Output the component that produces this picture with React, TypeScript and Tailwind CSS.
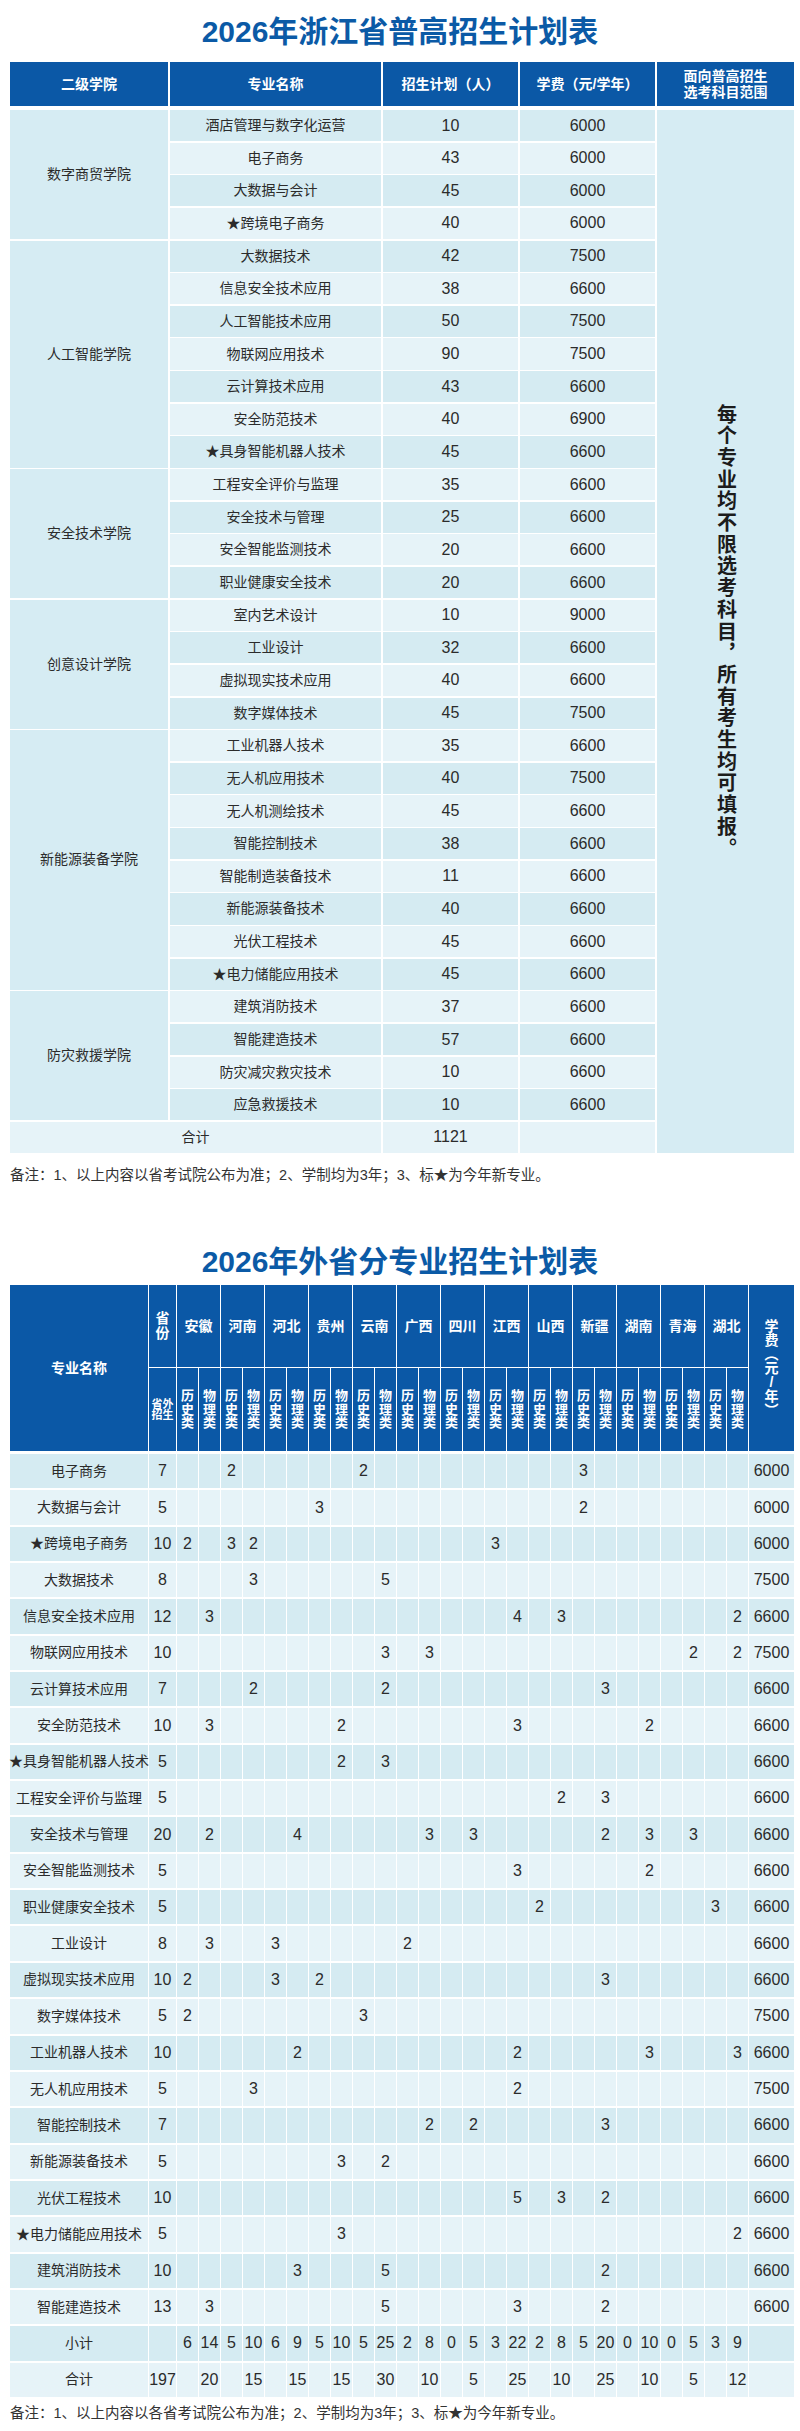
import React from 'react';

type Major = { name: string; plan: number; fee: number };
type College = { name: string; span: string; majors: Major[] };

const colleges: College[] = [
  {
    name: '数字商贸学院',
    span: 'row-span-4',
    majors: [
      { name: '酒店管理与数字化运营', plan: 10, fee: 6000 },
      { name: '电子商务', plan: 43, fee: 6000 },
      { name: '大数据与会计', plan: 45, fee: 6000 },
      { name: '★跨境电子商务', plan: 40, fee: 6000 },
    ],
  },
  {
    name: '人工智能学院',
    span: 'row-span-7',
    majors: [
      { name: '大数据技术', plan: 42, fee: 7500 },
      { name: '信息安全技术应用', plan: 38, fee: 6600 },
      { name: '人工智能技术应用', plan: 50, fee: 7500 },
      { name: '物联网应用技术', plan: 90, fee: 7500 },
      { name: '云计算技术应用', plan: 43, fee: 6600 },
      { name: '安全防范技术', plan: 40, fee: 6900 },
      { name: '★具身智能机器人技术', plan: 45, fee: 6600 },
    ],
  },
  {
    name: '安全技术学院',
    span: 'row-span-4',
    majors: [
      { name: '工程安全评价与监理', plan: 35, fee: 6600 },
      { name: '安全技术与管理', plan: 25, fee: 6600 },
      { name: '安全智能监测技术', plan: 20, fee: 6600 },
      { name: '职业健康安全技术', plan: 20, fee: 6600 },
    ],
  },
  {
    name: '创意设计学院',
    span: 'row-span-4',
    majors: [
      { name: '室内艺术设计', plan: 10, fee: 9000 },
      { name: '工业设计', plan: 32, fee: 6600 },
      { name: '虚拟现实技术应用', plan: 40, fee: 6600 },
      { name: '数字媒体技术', plan: 45, fee: 7500 },
    ],
  },
  {
    name: '新能源装备学院',
    span: 'row-span-8',
    majors: [
      { name: '工业机器人技术', plan: 35, fee: 6600 },
      { name: '无人机应用技术', plan: 40, fee: 7500 },
      { name: '无人机测绘技术', plan: 45, fee: 6600 },
      { name: '智能控制技术', plan: 38, fee: 6600 },
      { name: '智能制造装备技术', plan: 11, fee: 6600 },
      { name: '新能源装备技术', plan: 40, fee: 6600 },
      { name: '光伏工程技术', plan: 45, fee: 6600 },
      { name: '★电力储能应用技术', plan: 45, fee: 6600 },
    ],
  },
  {
    name: '防灾救援学院',
    span: 'row-span-4',
    majors: [
      { name: '建筑消防技术', plan: 37, fee: 6600 },
      { name: '智能建造技术', plan: 57, fee: 6600 },
      { name: '防灾减灾救灾技术', plan: 10, fee: 6600 },
      { name: '应急救援技术', plan: 10, fee: 6600 },
    ],
  },
];

const provinces = ['安徽', '河南', '河北', '贵州', '云南', '广西', '四川', '江西', '山西', '新疆', '湖南', '青海', '湖北'];

// sub column index: province * 2 (+0 历史类, +1 物理类)
type OutRow = { name: string; total: number; v: Record<number, number>; fee: number };

const outRows: OutRow[] = [
  { name: '电子商务', total: 7, v: { 2: 2, 8: 2, 18: 3 }, fee: 6000 },
  { name: '大数据与会计', total: 5, v: { 6: 3, 18: 2 }, fee: 6000 },
  { name: '★跨境电子商务', total: 10, v: { 0: 2, 2: 3, 3: 2, 14: 3 }, fee: 6000 },
  { name: '大数据技术', total: 8, v: { 3: 3, 9: 5 }, fee: 7500 },
  { name: '信息安全技术应用', total: 12, v: { 1: 3, 15: 4, 17: 3, 25: 2 }, fee: 6600 },
  { name: '物联网应用技术', total: 10, v: { 9: 3, 11: 3, 23: 2, 25: 2 }, fee: 7500 },
  { name: '云计算技术应用', total: 7, v: { 3: 2, 9: 2, 19: 3 }, fee: 6600 },
  { name: '安全防范技术', total: 10, v: { 1: 3, 7: 2, 15: 3, 21: 2 }, fee: 6600 },
  { name: '★具身智能机器人技术', total: 5, v: { 7: 2, 9: 3 }, fee: 6600 },
  { name: '工程安全评价与监理', total: 5, v: { 17: 2, 19: 3 }, fee: 6600 },
  { name: '安全技术与管理', total: 20, v: { 1: 2, 5: 4, 11: 3, 13: 3, 19: 2, 21: 3, 23: 3 }, fee: 6600 },
  { name: '安全智能监测技术', total: 5, v: { 15: 3, 21: 2 }, fee: 6600 },
  { name: '职业健康安全技术', total: 5, v: { 16: 2, 24: 3 }, fee: 6600 },
  { name: '工业设计', total: 8, v: { 1: 3, 4: 3, 10: 2 }, fee: 6600 },
  { name: '虚拟现实技术应用', total: 10, v: { 0: 2, 4: 3, 6: 2, 19: 3 }, fee: 6600 },
  { name: '数字媒体技术', total: 5, v: { 0: 2, 8: 3 }, fee: 7500 },
  { name: '工业机器人技术', total: 10, v: { 5: 2, 15: 2, 21: 3, 25: 3 }, fee: 6600 },
  { name: '无人机应用技术', total: 5, v: { 3: 3, 15: 2 }, fee: 7500 },
  { name: '智能控制技术', total: 7, v: { 11: 2, 13: 2, 19: 3 }, fee: 6600 },
  { name: '新能源装备技术', total: 5, v: { 7: 3, 9: 2 }, fee: 6600 },
  { name: '光伏工程技术', total: 10, v: { 15: 5, 17: 3, 19: 2 }, fee: 6600 },
  { name: '★电力储能应用技术', total: 5, v: { 7: 3, 25: 2 }, fee: 6600 },
  { name: '建筑消防技术', total: 10, v: { 5: 3, 9: 5, 19: 2 }, fee: 6600 },
  { name: '智能建造技术', total: 13, v: { 1: 3, 9: 5, 15: 3, 19: 2 }, fee: 6600 },
];

const subs = Array.from({ length: 26 }, (_, k) => k);
const subTotals = subs.map((k) => outRows.reduce((s, r) => s + (r.v[k] ?? 0), 0));
const grandTotal = outRows.reduce((s, r) => s + r.total, 0);

const rowBg = (i: number) => (i % 2 === 0 ? 'bg-[#d5ebf2]' : 'bg-[#e6f3f8]');
const cell = 'flex items-center justify-center whitespace-nowrap';

// stacks characters top to bottom
const Stack: React.FC<{ text: string; className?: string }> = ({ text, className }) => (
  <span className={`flex flex-col items-center ${className ?? ''}`}>
    {Array.from(text).map((ch, i) => (
      <span key={i}>{ch}</span>
    ))}
  </span>
);

const ZhejiangTable: React.FC = () => {
  const cells: React.ReactNode[] = [];
  let i = 0;
  colleges.forEach((c) => {
    c.majors.forEach((m, j) => {
      if (j === 0) {
        cells.push(
          <div key={`c-${c.name}`} className={`${cell} ${c.span} bg-[#d6ecf3]`}>
            {c.name}
          </div>
        );
      }
      const bg = rowBg(i);
      cells.push(
        <div key={`n-${i}`} className={`${cell} ${bg}`}>{m.name}</div>,
        <div key={`p-${i}`} className={`${cell} ${bg} text-[16px]`}>{m.plan}</div>,
        <div key={`f-${i}`} className={`${cell} ${bg} text-[16px]`}>{m.fee}</div>
      );
      if (i === 0) {
        cells.push(
          <div key="scope" className={`${cell} row-span-32 bg-[#d6ecf3]`}>
            <span className="[writing-mode:vertical-rl] text-[20px] font-bold tracking-[1.7px] text-[#1c1c1c]">
              每个专业均不限选考科目，所有考生均可填报。
            </span>
          </div>
        );
      }
      i += 1;
    });
  });
  const totalBg = rowBg(i);
  cells.push(
    <div key="t-label" className={`${cell} col-span-2 ${totalBg}`}>合计</div>,
    <div key="t-plan" className={`${cell} ${totalBg} text-[16px]`}>1121</div>,
    <div key="t-fee" className={`${cell} ${totalBg}`} />
  );

  return (
    <div className="px-[10px]">
      <div className="grid h-[44px] grid-cols-[158px_211px_135px_135px_137px] gap-x-[2px] bg-white text-[14px] font-bold text-white">
        <div className={`${cell} bg-[#0b58a6]`}>二级学院</div>
        <div className={`${cell} bg-[#0b58a6]`}>专业名称</div>
        <div className={`${cell} bg-[#0b58a6]`}>招生计划（人）</div>
        <div className={`${cell} bg-[#0b58a6]`}>学费（元/学年）</div>
        <div className={`${cell} flex-col bg-[#0b58a6] leading-[16px]`}>
          <span>面向普高招生</span>
          <span>选考科目范围</span>
        </div>
      </div>
      <div className="mt-[4px] grid auto-rows-[31.15px] grid-cols-[158px_211px_135px_135px_137px] gap-x-[2px] gap-y-[1.5px] bg-white text-[14px] text-[#2b2b2b]">
        {cells}
      </div>
    </div>
  );
};

const OutTable: React.FC = () => {
  const head = 'flex items-center justify-center bg-[#0b58a6] text-white font-bold';
  return (
    <div className="px-[10px]">
      <div className="grid grid-cols-[138px_27px_repeat(26,21px)_45px] grid-rows-[82px_83px] gap-[1px] bg-white">
        <div className={`${head} row-span-2 text-[14px]`}>专业名称</div>
        <div className={head}>
          <Stack text="省份" className="text-[14px] leading-[15px]" />
        </div>
        {provinces.map((p) => (
          <div key={p} className={`${head} col-span-2 text-[14px]`}>{p}</div>
        ))}
        <div className={`${head} row-span-2`}>
          <Stack text="学费︵元/年︶" className="text-[14px] leading-[14px]" />
        </div>
        <div className={`${head} flex-col text-[11px] leading-[11px]`}>
          <span>省外</span>
          <span>招生</span>
        </div>
        {subs.map((k) => (
          <div key={`h-${k}`} className={head}>
            <Stack text={k % 2 === 0 ? '历史类' : '物理类'} className="text-[13px] leading-[13.5px]" />
          </div>
        ))}
      </div>

      <div className="mt-[3px] grid auto-rows-[34.35px] grid-cols-[138px_27px_repeat(26,21px)_45px] gap-x-[1px] gap-y-[2px] bg-white text-[16px] text-[#2b2b2b]">
        {outRows.map((r, i) => {
          const bg = rowBg(i);
          return (
            <React.Fragment key={r.name}>
              <div className={`${cell} ${bg} text-[14px]`}>{r.name}</div>
              <div className={`${cell} ${bg}`}>{r.total}</div>
              {subs.map((k) => (
                <div key={k} className={`${cell} ${bg}`}>{r.v[k] ?? ''}</div>
              ))}
              <div className={`${cell} ${bg}`}>{r.fee}</div>
            </React.Fragment>
          );
        })}
        <div className={`${cell} ${rowBg(24)} text-[14px]`}>小计</div>
        <div className={`${cell} ${rowBg(24)}`} />
        {subTotals.map((t, k) => (
          <div key={`s-${k}`} className={`${cell} ${rowBg(24)}`}>{t}</div>
        ))}
        <div className={`${cell} ${rowBg(24)}`} />
        <div className={`${cell} ${rowBg(25)} text-[14px]`}>合计</div>
        <div className={`${cell} ${rowBg(25)}`}>{grandTotal}</div>
        {subs.map((k) => (
          <div key={`g-${k}`} className={`${cell} ${rowBg(25)}`}>
            {k % 2 === 1 ? subTotals[k - 1] + subTotals[k] : ''}
          </div>
        ))}
        <div className={`${cell} ${rowBg(25)}`} />
      </div>
    </div>
  );
};

export default function App() {
  return (
    <div className="min-h-[2431px] w-[800px] bg-white font-['Liberation_Sans','Noto_Sans_CJK_SC',sans-serif]">
      <h1 className="flex h-[62px] items-center justify-center text-[30px] font-bold text-[#0b5aa6]">
        2026年浙江省普高招生计划表
      </h1>
      <ZhejiangTable />
      <p className="mt-[12px] flex h-[22px] items-center px-[10px] text-[14.5px] text-[#333]">
        备注：1、以上内容以省考试院公布为准；2、学制均为3年；3、标★为今年新专业。
      </p>
      <h2 className="mt-[52px] flex h-[44px] items-center justify-center text-[30px] font-bold text-[#0b5aa6]">
        2026年外省分专业招生计划表
      </h2>
      <div className="mt-[2px]">
        <OutTable />
      </div>
      <p className="mt-[6px] flex h-[22px] items-center px-[10px] text-[14.5px] text-[#333]">
        备注：1、以上内容以各省考试院公布为准；2、学制均为3年；3、标★为今年新专业。
      </p>
    </div>
  );
}
